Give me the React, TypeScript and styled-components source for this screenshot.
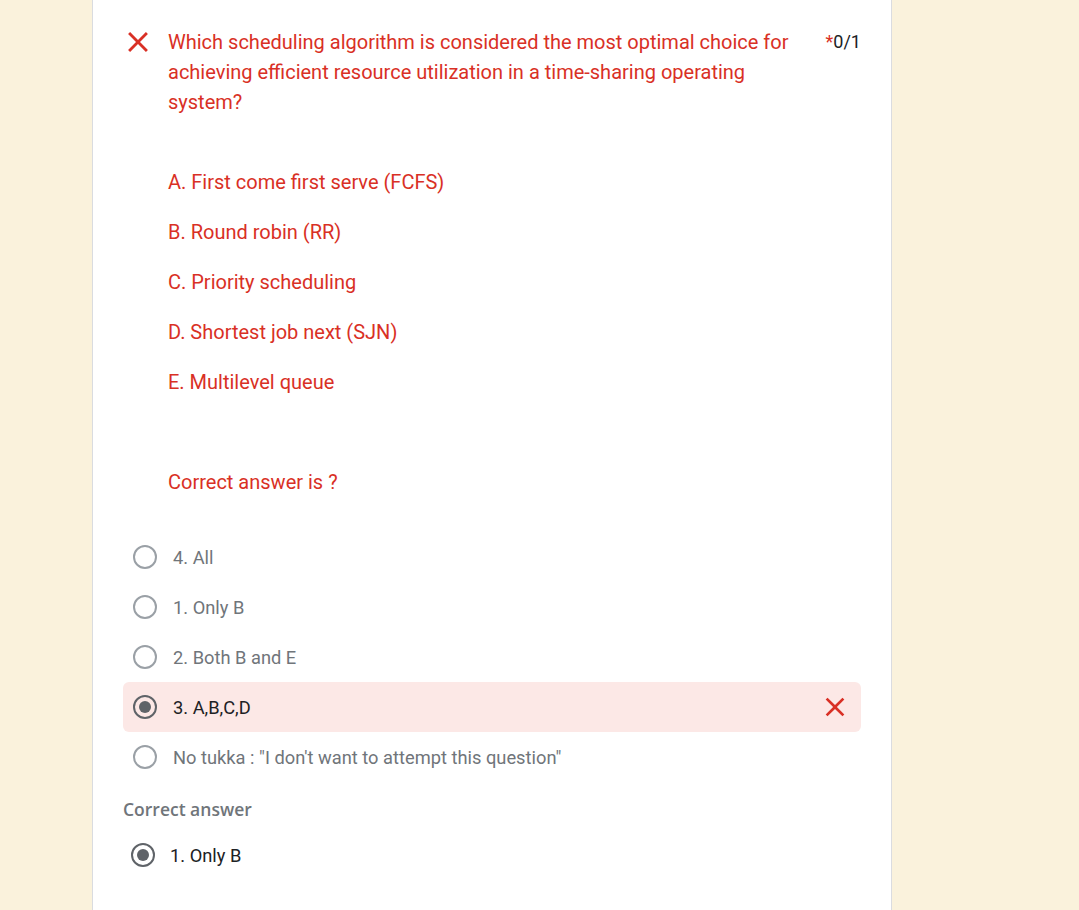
import React from "react";
import styled, { createGlobalStyle } from "styled-components";

const GlobalStyle = createGlobalStyle`
  html, body {
    margin: 0;
    padding: 0;
    background: #faf2dc;
    font-family: Roboto, "Noto Sans", Arial, sans-serif;
  }
`;

const Page = styled.div`
  width: 1079px;
  height: 910px;
  overflow: hidden;
  display: flex;
  align-items: flex-start;
  justify-content: flex-start;
`;

const Card = styled.div`
  margin-left: 92px;
  margin-top: -20px;
  width: 800px;
  box-sizing: border-box;
  background: #ffffff;
  border: 1px solid #dadce0;
  border-radius: 8px;
  padding: 46px 30px 80px 30px;
`;

const QuestionRow = styled.div`
  display: flex;
  align-items: flex-start;
`;

const WrongIcon = styled.div`
  width: 30px;
  height: 30px;
  display: flex;
  align-items: center;
  justify-content: center;
  flex: none;
  svg {
    flex: none;
  }
`;

const QuestionBody = styled.div`
  flex: 1;
  margin-left: 15px;
  color: #d93025;
  font-size: 20px;
  line-height: 30px;
  padding-right: 20px;
`;

const Title = styled.div`
  max-width: 630px;
`;

const ChoiceList = styled.div`
  margin-top: 50px;
  display: flex;
  flex-direction: column;
  gap: 20px;
`;

const Ask = styled.div`
  margin-top: 70px;
`;

const Score = styled.div`
  flex: none;
  font-size: 18px;
  line-height: 30px;
  color: #202124;
`;

const Star = styled.span`
  color: #d93025;
`;

const Options = styled.div`
  margin-top: 35px;
  display: flex;
  flex-direction: column;
`;

const Option = styled.div<{ $wrong?: boolean }>`
  height: 50px;
  display: flex;
  align-items: center;
  padding-left: 10px;
  padding-right: 10px;
  border-radius: 6px;
  background: ${(p) => (p.$wrong ? "#fce8e6" : "transparent")};
`;

const Radio = styled.div<{ $checked?: boolean }>`
  width: 24px;
  height: 24px;
  box-sizing: border-box;
  border-radius: 50%;
  border: 2px solid ${(p) => (p.$checked ? "#5f6368" : "#9aa0a6")};
  display: flex;
  align-items: center;
  justify-content: center;
  flex: none;
  &::after {
    content: "";
    display: ${(p) => (p.$checked ? "block" : "none")};
    width: 12px;
    height: 12px;
    border-radius: 50%;
    background: #5f6368;
  }
`;

const OptionText = styled.span<{ $dark?: boolean }>`
  margin-left: 16px;
  font-size: 18.3px;
  color: ${(p) => (p.$dark ? "#202124" : "#70757a")};
  flex: 1;
`;

const CorrectLabel = styled.div`
  margin-top: 15px;
  font-family: "Open Sans", Roboto, sans-serif;
  font-weight: 600;
  font-size: 17.5px;
  color: #70757a;
`;

const CorrectRow = styled.div`
  display: flex;
  align-items: center;
  margin-top: 22px;
  padding-left: 8px;
`;

const CorrectText = styled.span`
  margin-left: 15px;
  font-size: 18.3px;
  color: #202124;
`;

function Cross({ size = 20 }: { size?: number }) {
  return (
    <svg width={size} height={size} viewBox="0 0 24 24" fill="#d93025">
      <path d="M19 6.41 17.59 5 12 10.59 6.41 5 5 6.41 10.59 12 5 17.59 6.41 19 12 13.41 17.59 19 19 17.59 13.41 12z" />
    </svg>
  );
}

const choices = [
  "A. First come first serve (FCFS)",
  "B. Round robin (RR)",
  "C. Priority scheduling",
  "D. Shortest job next (SJN)",
  "E. Multilevel queue",
];

const options = [
  { label: "4. All" },
  { label: "1. Only B" },
  { label: "2. Both B and E" },
  { label: "3. A,B,C,D", picked: true },
  { label: 'No tukka : "I don\'t want to attempt this question"' },
];

export default function App() {
  return (
    <Page>
      <GlobalStyle />
      <Card>
        <QuestionRow>
          <WrongIcon>
            <Cross size={34} />
          </WrongIcon>
          <QuestionBody>
            <Title>
              Which scheduling algorithm is considered the most optimal choice for achieving efficient
              resource utilization in a time-sharing operating system?
            </Title>
            <ChoiceList>
              {choices.map((c) => (
                <div key={c}>{c}</div>
              ))}
            </ChoiceList>
            <Ask>Correct answer is ?</Ask>
          </QuestionBody>
          <Score>
            <Star>*</Star>0/1
          </Score>
        </QuestionRow>
        <Options>
          {options.map((o) => (
            <Option key={o.label} $wrong={o.picked}>
              <Radio $checked={o.picked} />
              <OptionText $dark={o.picked}>{o.label}</OptionText>
              {o.picked && <Cross size={32} />}
            </Option>
          ))}
        </Options>
        <CorrectLabel>Correct answer</CorrectLabel>
        <CorrectRow>
          <Radio $checked />
          <CorrectText>1. Only B</CorrectText>
        </CorrectRow>
      </Card>
    </Page>
  );
}
